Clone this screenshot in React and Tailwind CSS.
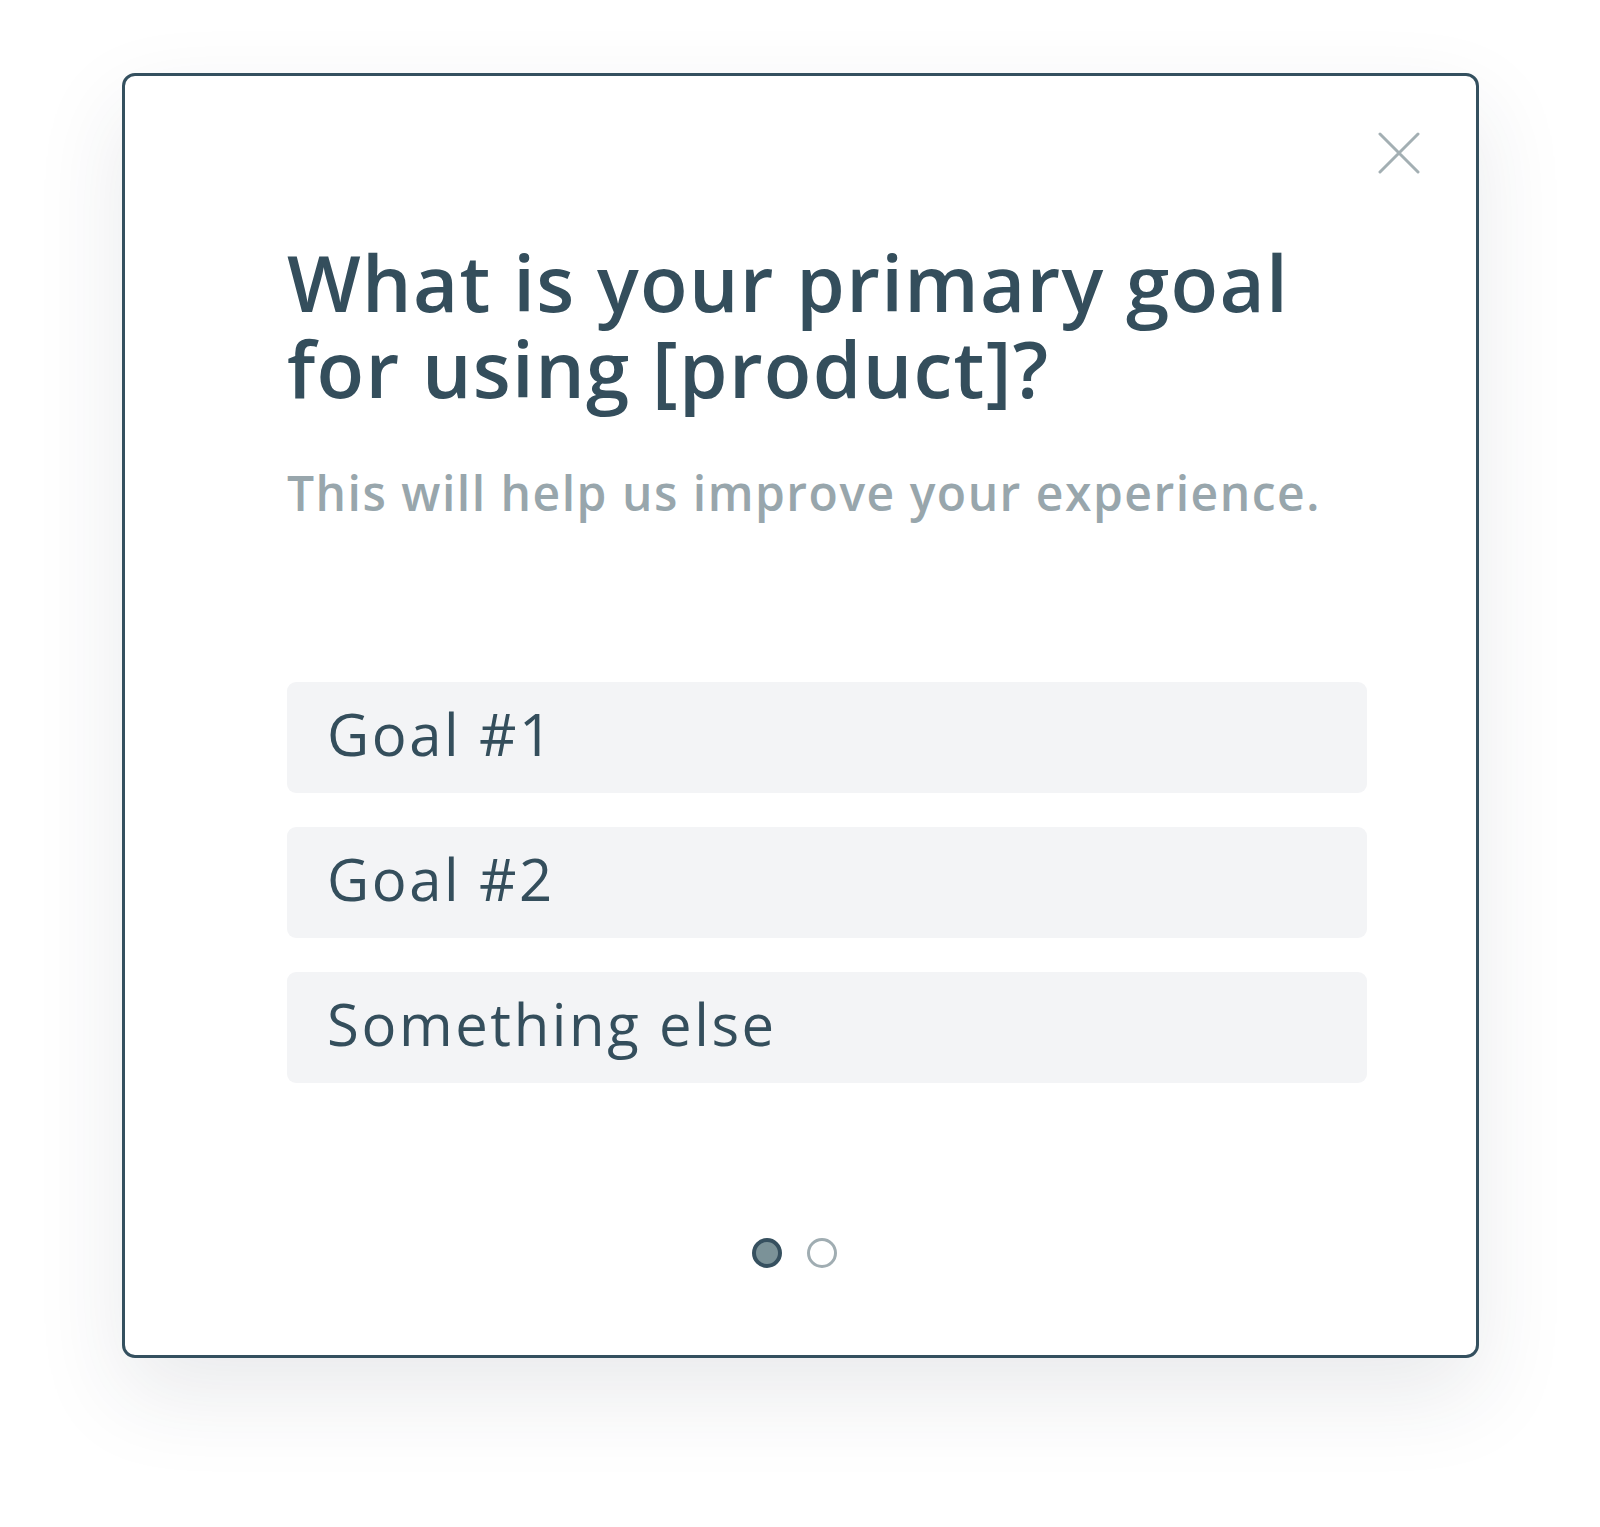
import React, { useState } from 'react';

const options = ['Goal #1', 'Goal #2', 'Something else'];

const CloseIcon = () => (
  <svg width="42" height="42" viewBox="0 0 42 42" fill="none">
    <path d="M2 2L40 40M40 2L2 40" stroke="#a3afb3" strokeWidth="3" strokeLinecap="round" />
  </svg>
);

const App = () => {
  const [step] = useState(0);

  return (
    <div className="min-h-[1527px] w-[1600px] bg-white pt-[73px] pl-[122px] font-['Open_Sans',sans-serif]">
      <div className="relative w-[1357px] bg-white border-[3px] border-[#34505f] rounded-[13px] shadow-[0_36px_90px_rgba(40,50,70,0.10)] pl-[162px] pr-[109px] pt-[163px] pb-[87px]">
        <button className="absolute top-[56px] right-[56px]">
          <CloseIcon />
        </button>

        <h1 className="text-[78px] leading-[86px] font-semibold text-[#344e5c] tracking-[1.3px]">
          What is your primary goal<br />for using [product]?
        </h1>
        <p className="mt-[53px] text-[48px] leading-[58px] font-semibold text-[#98a6ac] tracking-[1.5px]">
          This will help us improve your experience.
        </p>

        <div className="mt-[160px] flex flex-col gap-[34px]">
          {options.map((o) => (
            <div
              key={o}
              className="h-[111px] bg-[#f3f4f6] rounded-[9px] flex items-center pl-[40px] pb-[8px] text-[58px] leading-none text-[#344e5c] tracking-[2.6px]"
            >
              {o}
            </div>
          ))}
        </div>

        <div className="mt-[155px] flex justify-center gap-[25px] -ml-[162px] -mr-[97px]">
          {[0, 1].map((i) => (
            <span
              key={i}
              className={
                i === step
                  ? 'w-[30px] h-[30px] rounded-full bg-[#7b9298] border-[4px] border-[#36505f]'
                  : 'w-[30px] h-[30px] rounded-full bg-white border-[3px] border-[#a0adb2]'
              }
            />
          ))}
        </div>
      </div>
    </div>
  );
};

export default App;
